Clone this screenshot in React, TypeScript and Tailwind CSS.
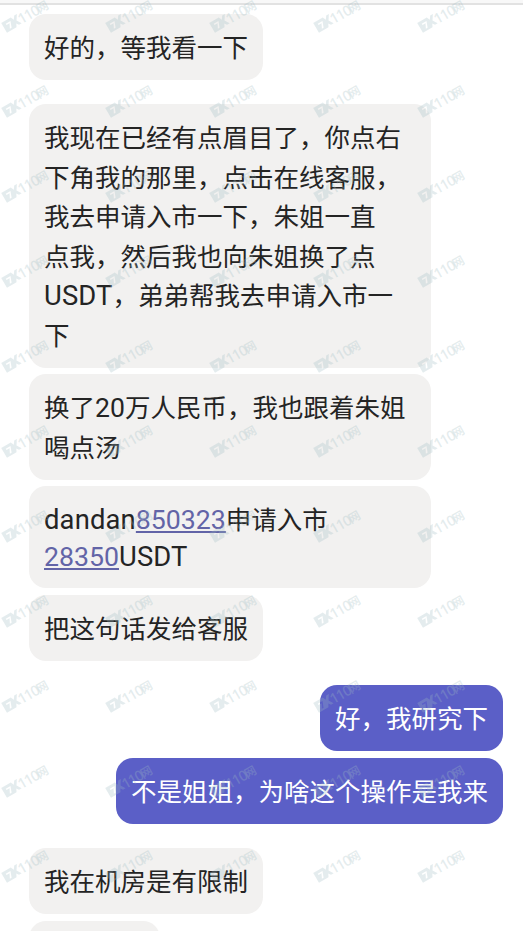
import clsx from "clsx";
import type { ReactNode } from "react";

type Message = {
  lines: ReactNode[];
  mine?: boolean;
  tight?: boolean;
  className: string;
};

// Latin letters and digits are set a little larger than the Chinese text
const Latin = ({ children }: { children: ReactNode }) => (
  <span className="font-[Roboto] text-[27.4px] tracking-[0.15px]">{children}</span>
);

const Digits = ({ children }: { children: ReactNode }) => (
  <span className="font-[Roboto] text-[26.6px]">{children}</span>
);

const NumberLink = ({ children }: { children: ReactNode }) => (
  <a className="font-[Roboto] text-[26.7px] text-[#6264a7] underline decoration-[1.5px] underline-offset-[2px]">
    {children}
  </a>
);

const messages: Message[] = [
  { lines: ["好的，等我看一下"], className: "mt-[9px] h-[66px]" },
  {
    lines: [
      "我现在已经有点眉目了，你点右",
      "下角我的那里，点击在线客服，",
      "我去申请入市一下，朱姐一直",
      "点我，然后我也向朱姐换了点",
      <><Latin>USDT</Latin>，弟弟帮我去申请入市一</>,
      "下",
    ],
    className: "mt-6 h-[264px] w-[402px]",
  },
  {
    lines: [<>换了<Digits>20</Digits>万人民币，我也跟着朱姐</>, "喝点汤"],
    className: "mt-[6px] h-[106px] w-[402px]",
  },
  {
    lines: [
      <><Latin>dandan</Latin><NumberLink>850323</NumberLink>申请入市</>,
      <><NumberLink>28350</NumberLink><Latin>USDT</Latin></>,
    ],
    tight: true,
    className: "mt-[6px] h-[102px] w-[402px]",
  },
  { lines: ["把这句话发给客服"], className: "mt-[7px] h-[66px]" },
  { lines: ["好，我研究下"], mine: true, className: "mt-6 h-[66px]" },
  { lines: ["不是姐姐，为啥这个操作是我来"], mine: true, className: "mt-[7px] h-[66px]" },
  { lines: ["我在机房是有限制"], className: "mt-6 h-[66px]" },
  { lines: [], className: "mt-[7px] h-[66px] w-[131px]" },
];

function Bubble({ lines, mine, tight, className }: Message) {
  return (
    <div
      className={clsx(
        "shrink-0 rounded-[17px] px-[15px] pt-3 whitespace-nowrap",
        mine ? "self-end bg-[#5b5fc7] text-white" : "self-start bg-[#f2f1f0] text-[#242424]",
        className
      )}
    >
      {lines.map((line, i) => (
        <p key={i} className={tight ? "h-[36.5px]" : "h-[39.6px]"}>
          {line}
        </p>
      ))}
    </div>
  );
}

function Watermark() {
  return (
    <svg width="104" height="85" viewBox="0 0 104 85" className="shrink-0 overflow-visible">
      <g transform="translate(7.4 32.6) rotate(-30)" fill="#9fbcc2" fillOpacity="0.28">
        <path
          fillRule="evenodd"
          d="M-.5-11.5H10.5L12-8 14.5-11.5H17.5L14-6 17-1H14L12.3-3.5 10.5 0H-.5ZM3-8.5V-7H6.5L4-2H6L8.5-8.5Z"
        />
        <text x="16" y="0" fontSize="14.5" fontWeight="600" fontFamily="'Open Sans', sans-serif" letterSpacing="-1">
          110
        </text>
        <text x="37" y="-0.5" fontSize="12" fontWeight="700" fontFamily="'Noto Sans CJK SC', sans-serif">
          网
        </text>
      </g>
    </svg>
  );
}

export default function App() {
  const marks = Array.from({ length: 55 }, (_, i) => i); // 11 rows of 5

  return (
    <main className="relative h-[931px] w-[523px] overflow-hidden bg-white font-['Noto_Sans_CJK_SC',sans-serif] text-[25.5px] leading-[39.5px]">
      <div className="h-[5px] border-b-2 border-[#e2e2e2] bg-[#f8f8f8]" />
      <section className="flex flex-col pr-5 pl-[29px]">
        {messages.map((message, i) => (
          <Bubble key={i} {...message} />
        ))}
      </section>

      <div className="pointer-events-none absolute inset-0 grid w-[520px] grid-cols-5 content-start">
        {marks.map((mark) => (
          <Watermark key={mark} />
        ))}
      </div>
    </main>
  );
}
